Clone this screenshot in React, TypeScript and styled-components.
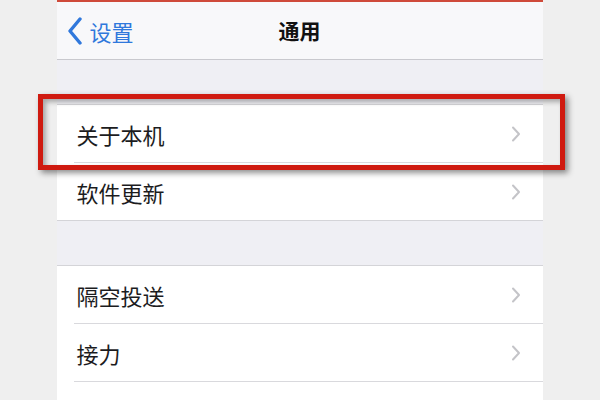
import React from "react";
import styled, { createGlobalStyle } from "styled-components";

const Global = createGlobalStyle`
  html, body { margin: 0; padding: 0; background: #efefef; }
  body { font-family: "Noto Sans CJK SC", "Noto Sans", sans-serif; }
`;

const Page = styled.div`
  position: relative;
  width: 600px;
  height: 400px;
  overflow: hidden;
  display: flex;
  justify-content: center;
  background: #efefef;
`;

const Phone = styled.div`
  width: 486px;
  margin-left: -1px;
  background: #efeff4;
  display: flex;
  flex-direction: column;
  & > * { flex-shrink: 0; }
`;

const TopStrip = styled.div`
  height: 2px;
  background: #cf4a3a;
`;

const NavBar = styled.div`
  height: 57px;
  background: #f8f8fa;
  border-bottom: 1px solid #c9c9ce;
  display: grid;
  grid-template-columns: 1fr auto 1fr;
  align-items: center;
`;

const Back = styled.div`
  display: flex;
  align-items: center;
  gap: 7px;
  padding-left: 10px;
  color: #3078dc;
  font-size: 22px;
  line-height: 1;
`;

const Title = styled.div`
  font-size: 21px;
  font-weight: 700;
  color: #111;
  line-height: 1;
`;

const Gap = styled.div`
  height: 44px;
`;

const Group = styled.div`
  background: #fff;
  border-top: 1px solid #d4d4d8;
  border-bottom: 1px solid #d4d4d8;
`;

const OpenGroup = styled(Group)`
  border-bottom: none;
  flex: 1;
`;

const Row = styled.div<{ $last?: boolean }>`
  position: relative;
  height: 57px;
  display: flex;
  align-items: center;
  justify-content: space-between;
  padding: 0 22px 0 20px;
  font-size: 22px;
  color: #1c1c1e;
  ${(p) => !p.$last && `border-bottom: 1px solid transparent;`}
  &::after {
    content: "";
    display: ${(p) => (p.$last ? "none" : "block")};
    position: absolute;
    left: 17px;
    right: 0;
    bottom: -1px;
    height: 1px;
    background: #d9d9dd;
  }
`;

const Highlight = styled.div`
  position: absolute;
  left: 38px;
  top: 94px;
  width: 527px;
  height: 76px;
  box-sizing: border-box;
  border: 5px solid #cf1a10;
  box-shadow: 3px 3px 6px rgba(0, 0, 0, 0.45),
    inset 3px 3px 5px rgba(0, 0, 0, 0.3);
  pointer-events: none;
`;

const Chevron = () => (
  <svg width="10" height="16" viewBox="0 0 10 16">
    <path d="M2 1.5 L8 8 L2 14.5" fill="none" stroke="#c4c4c8" strokeWidth="2" strokeLinecap="round" strokeLinejoin="round" />
  </svg>
);

const BackChevron = () => (
  <svg width="16" height="28" viewBox="0 0 16 28">
    <path d="M13 2 L3 14 L13 26" fill="none" stroke="#3078dc" strokeWidth="3.4" strokeLinecap="round" strokeLinejoin="round" />
  </svg>
);

const Item = ({ label, last }: { label: string; last?: boolean }) => (
  <Row $last={last}>
    <span>{label}</span>
    <Chevron />
  </Row>
);

export default function App() {
  return (
    <Page>
      <Global />
      <Phone>
        <TopStrip />
        <NavBar>
          <Back>
            <BackChevron />
            <span>设置</span>
          </Back>
          <Title>通用</Title>
          <div />
        </NavBar>
        <Gap />
        <Group>
          <Item label="关于本机" />
          <Item label="软件更新" last />
        </Group>
        <Gap />
        <OpenGroup>
          <Item label="隔空投送" />
          <Item label="接力" />
          <Row />
        </OpenGroup>
      </Phone>
      <Highlight />
    </Page>
  );
}
